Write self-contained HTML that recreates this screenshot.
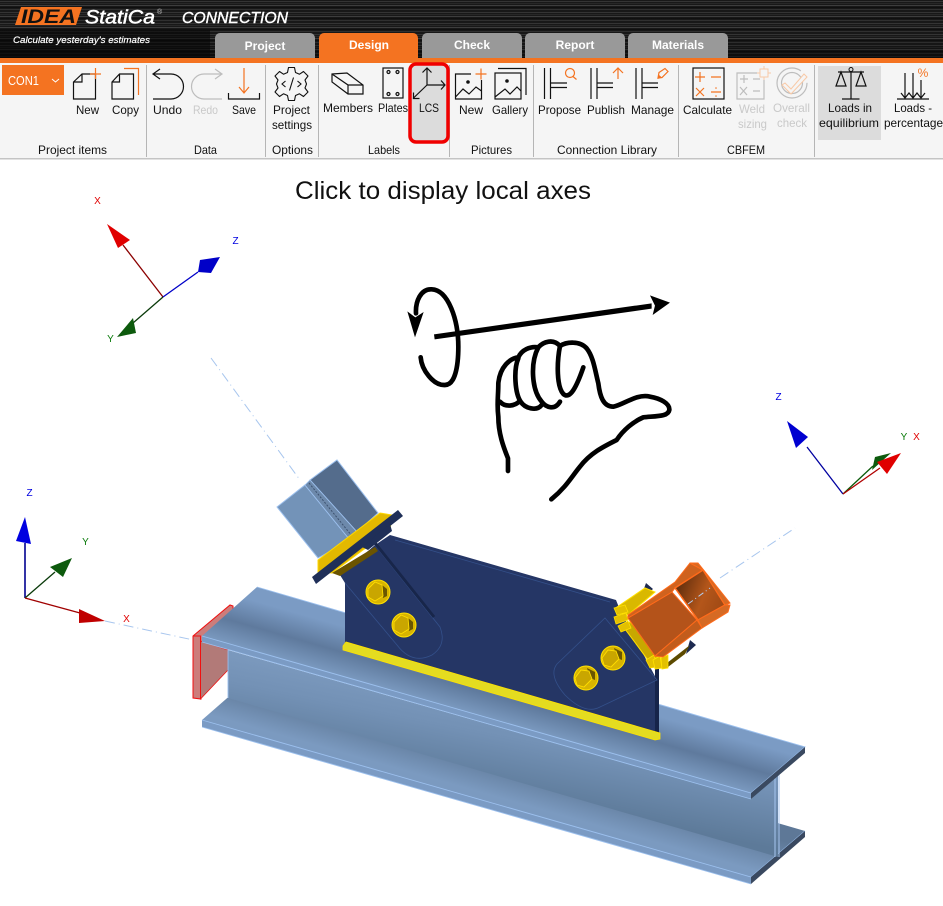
<!DOCTYPE html>
<html lang="en">
<head>
<meta charset="utf-8">
<title>IDEA StatiCa Connection</title>
<style>
html,body{margin:0;padding:0;background:#fff;width:943px;height:906px;overflow:hidden}
svg{display:block;font-family:"Liberation Sans",sans-serif}
.l{font-size:12px;fill:#111}
.d{font-size:12px;fill:#c9c9c9}
.k{fill:none;stroke:#111;stroke-width:1.2}
.o{fill:none;stroke:#f47321;stroke-width:1.2}
.g{fill:none;stroke:#bdbdbd;stroke-width:1.2}
.t{font-size:12px;font-weight:bold;fill:#fff;text-anchor:middle}
.ax{font-size:10px;text-anchor:middle}
.h{fill:none;stroke:#000;stroke-width:14;stroke-linecap:round;stroke-linejoin:round}
.e{stroke:#9cc0ee;stroke-width:.9}
.bo{fill:#d8b400;stroke:#ffe000;stroke-width:1}
.bh{fill:#c9a600;stroke:#ffdd00;stroke-width:.9}
.bn{fill:#6a5600}
</style>
</head>
<body>
<svg width="943" height="906" viewBox="0 0 943 906" xmlns="http://www.w3.org/2000/svg">
<defs>
<pattern id="st" width="943" height="11" patternUnits="userSpaceOnUse">
<rect width="943" height="11" fill="#1b1b1b"/>
<rect y="1" width="943" height="1" fill="#3a3a3a"/>
<rect y="3" width="943" height="1" fill="#2b2b2b"/>
<rect y="5" width="943" height="1" fill="#444"/>
<rect y="7" width="943" height="1" fill="#111"/>
<rect y="9" width="943" height="1" fill="#353535"/>
</pattern>
<linearGradient id="hd" x1="0" y1="0" x2="0" y2="1">
<stop offset="0" stop-color="#000" stop-opacity=".1"/>
<stop offset=".7" stop-color="#000" stop-opacity=".1"/>
<stop offset="1" stop-color="#000" stop-opacity=".55"/>
</linearGradient>
<linearGradient id="web" gradientUnits="userSpaceOnUse" x1="500" y1="690" x2="480" y2="790">
<stop offset="0" stop-color="#7f9dc2"/>
<stop offset=".45" stop-color="#7391b5"/>
<stop offset="1" stop-color="#5d7a99"/>
</linearGradient>
<linearGradient id="tf" gradientUnits="userSpaceOnUse" x1="530" y1="640" x2="500" y2="745">
<stop offset="0" stop-color="#7b9bc4"/>
<stop offset=".35" stop-color="#7b9bc4"/>
<stop offset=".58" stop-color="#5f7a9d"/>
<stop offset=".8" stop-color="#7b9ac0"/>
<stop offset="1" stop-color="#7b9bc4"/>
</linearGradient>
<linearGradient id="bf" gradientUnits="userSpaceOnUse" x1="500" y1="760" x2="480" y2="830">
<stop offset="0" stop-color="#5e7897"/>
<stop offset=".5" stop-color="#7b9ac0"/>
<stop offset="1" stop-color="#7b9bc4"/>
</linearGradient>
<linearGradient id="op" x1="0" y1=".2" x2="1" y2=".6">
<stop offset="0" stop-color="#55280c"/>
<stop offset=".6" stop-color="#b4561a"/>
<stop offset="1" stop-color="#a04a15"/>
</linearGradient>
</defs>

<!-- header -->
<rect width="943" height="58" fill="url(#st)"/>
<rect width="943" height="58" fill="url(#hd)"/>
<rect x="0" y="30" width="210" height="28" fill="#050505" opacity=".55"/>
<path d="M21 7H82L76 25H15Z" fill="#f47321"/>
<text x="21" y="23" font-size="19" font-weight="bold" font-style="italic" fill="#111" textLength="55" lengthAdjust="spacingAndGlyphs">IDEA</text>
<text x="85" y="23.500" font-size="19" font-style="italic" fill="#fff" stroke="#fff" stroke-width=".5" textLength="70" lengthAdjust="spacingAndGlyphs">StatiCa</text>
<text x="157" y="14" font-size="7" fill="#ccc">®</text>
<text x="182" y="23" font-size="16" font-style="italic" fill="#fff" stroke="#fff" stroke-width=".4" textLength="106" lengthAdjust="spacingAndGlyphs">CONNECTION</text>
<text x="13" y="43" font-size="9.500" font-style="italic" fill="#fff" stroke="#fff" stroke-width=".2" textLength="137" lengthAdjust="spacingAndGlyphs">Calculate yesterday's estimates</text>

<!-- tabs -->
<path d="M215 58V38a5 5 0 0 1 5-5h90a5 5 0 0 1 5 5v20Z" fill="#999"/>
<path d="M319 58V38a5 5 0 0 1 5-5h89a5 5 0 0 1 5 5v20Z" fill="#f47321"/>
<path d="M422 58V38a5 5 0 0 1 5-5h90a5 5 0 0 1 5 5v20Z" fill="#999"/>
<path d="M525 58V38a5 5 0 0 1 5-5h90a5 5 0 0 1 5 5v20Z" fill="#999"/>
<path d="M628 58V38a5 5 0 0 1 5-5h90a5 5 0 0 1 5 5v20Z" fill="#999"/>
<text class="t" x="265" y="50">Project</text>
<text class="t" x="369" y="49">Design</text>
<text class="t" x="472" y="49">Check</text>
<text class="t" x="575" y="49">Report</text>
<text class="t" x="678" y="49">Materials</text>

<rect y="58" width="943" height="5" fill="#f47321"/>
<rect y="63" width="943" height="95" fill="#f5f5f5"/>
<rect y="158" width="943" height="1.500" fill="#c4c4c4"/>

<!-- separators -->
<g fill="#b5b5b5">
<rect x="146" y="65" width="1" height="92"/><rect x="265" y="65" width="1" height="92"/>
<rect x="318" y="65" width="1" height="92"/><rect x="449" y="65" width="1" height="92"/>
<rect x="533" y="65" width="1" height="92"/><rect x="678" y="65" width="1" height="92"/>
<rect x="814" y="65" width="1" height="92"/>
</g>

<!-- highlights -->
<rect x="818" y="66" width="63" height="74" fill="#dcdcdc"/>
<rect x="410" y="64" width="38" height="78" rx="6" fill="#dcdcdc" stroke="#f00000" stroke-width="3.500"/>

<!-- CON1 -->
<rect x="2" y="65" width="62" height="30" fill="#f47321"/>
<text x="8" y="85" font-size="12.500" fill="#fff" textLength="31" lengthAdjust="spacingAndGlyphs">CON1</text>
<path d="M52 79l3.500 3 3.500-3" fill="none" stroke="#fff" stroke-width="1"/>

<!-- New -->
<path class="k" d="M73.500 82L82 74H95.500V99H73.500ZM82 74V82H73.500"/>
<path class="o" d="M95.500 68V79M90 74H101"/>
<!-- Copy -->
<path class="k" d="M112 82L119.500 74H133.500V99H112ZM119.500 74V82H112"/>
<path class="o" d="M124 68.500H138.500V95"/>
<!-- Undo -->
<path class="k" d="M153 74H171A12.500 12.500 0 0 1 171 99H153M160 69L153 74L160 79"/>
<!-- Redo -->
<path class="g" d="M222 74H204A12.500 12.500 0 0 0 204 99H222M215 69L222 74L215 79"/>
<!-- Save -->
<path class="o" d="M244 68V93M239 87L244 93L249 87"/>
<path class="k" d="M228.500 93V99H259.500V93"/>
<!-- Settings -->
<g transform="translate(291.500 84)" fill="#f5f5f5" stroke="#111" stroke-width="1.100">
<path d="M-3-16.500H3L4-11.500 8-9.800 12-12.500 16.500-8 13.500-4 15-.0 13.500 4 16.500 8 12 12.500 8 9.800 4 11.500 3 16.500H-3L-4 11.500-8 9.800-12 12.500-16.500 8-13.500 4-15 0-13.500-4-16.500-8-12-12.500-8-9.800-4-11.500Z" stroke-linejoin="round"/>
<path d="M-6-3L-9.500 0-6 3M6-3L9.500 0 6 3M2-6.500L-2 6.500" fill="none"/>
</g>
<!-- Members -->
<path class="k" d="M332 74L347 73L363 85V94H348L332 82ZM332 74L348 85V94M348 85H363"/>
<!-- Plates -->
<rect class="k" x="383" y="68" width="20" height="30"/>
<g class="k"><circle cx="388.500" cy="72" r="1.500"/><circle cx="397.500" cy="72" r="1.500"/><circle cx="388.500" cy="94" r="1.500"/><circle cx="397.500" cy="94" r="1.500"/></g>
<!-- LCS -->
<path class="k" d="M427 85V68M422.500 72.500L427 68L431.500 72.500M427 85H445M441 80.500L445 85L441 89.500M427 85L413 98.500M413.500 92.500V98.500H419.500"/>
<!-- Picture new -->
<path class="k" d="M471 74H455.500V99H481.500V80"/>
<circle cx="468" cy="82" r="1.800" fill="#111"/>
<path class="k" d="M455.500 97L463 89L469 94L476 87L481.500 91"/>
<path class="o" d="M481 68.500V79.500M475.500 74H486.500"/>
<!-- Gallery -->
<rect class="k" x="495" y="73" width="26" height="26"/>
<path class="k" d="M498 68.500H526V95M495 97L505 89L510 94L517 87L521 91"/>
<circle cx="507" cy="81" r="1.800" fill="#111"/>
<!-- Connection library -->
<path class="k" d="M544.500 68V99M550.500 68V99M550.500 83H567M550.500 87.500H567"/>
<circle class="o" cx="570" cy="73" r="4.500"/><path class="o" d="M573 76.500L576.500 79.500"/>
<path class="k" d="M591 68V99M597 68V99M597 83H613M597 87.500H613"/>
<path class="o" d="M618 68V79M613 73L618 68L623 73"/>
<path class="k" d="M636 68V99M642 68V99M642 83H658M642 87.500H658"/>
<path class="o" d="M658 78L659 72.500L665 68.500L668 71.500L662 77.500Z"/><path d="M657.500 79L658.500 74.500L662 77.500Z" fill="#f47321"/>
<!-- Calculate -->
<rect class="k" x="693" y="68" width="31" height="31"/>
<path class="o" d="M695 77H705M700 72V82M711 77H721M696 88L704 96M704 88L696 96M711 92H721"/>
<circle cx="716" cy="88" r=".8" fill="#f47321"/><circle cx="716" cy="96" r=".8" fill="#f47321"/>
<!-- Weld sizing -->
<path class="g" d="M757 73H737V99H764V80M740 79H748M744 75V83M753 79H760M740 87L747 95M747 87L740 95M753 91H760"/>
<rect x="760" y="69" width="8" height="8" fill="none" stroke="#f8c9a6" stroke-width="1"/>
<path d="M764 66V69M764 77V80M757 73H760M768 73H771" stroke="#f8c9a6" stroke-width="1"/>
<!-- Overall check -->
<circle class="g" cx="792" cy="83" r="15" stroke-dasharray="80 14"/>
<circle class="g" cx="792" cy="83" r="10.500"/>
<path d="M785 83L791 89L804 74L807 77L791 94L782 85Z" fill="#f5f5f5" stroke="#f8c9a6"/>
<!-- Equilibrium -->
<path class="k" d="M851 70V98.500M842 99H859.500M838 72H864M841 72L836 86H846ZM861 72L856 86H866Z"/>
<circle cx="851" cy="69.500" r="2" fill="#dcdcdc" stroke="#111"/>
<!-- percentage -->
<path class="k" d="M905 73V98M913 73V98M921 80V98M897 99H929M901 93L905 98L909 93L913 98L917 93L921 98L925 93"/>
<text x="923" y="77" font-size="12" fill="#f47321" text-anchor="middle">%</text>

<!-- labels -->
<text class="l" x="76" y="114" textLength="23" lengthAdjust="spacingAndGlyphs">New</text>
<text class="l" x="112" y="114" textLength="27" lengthAdjust="spacingAndGlyphs">Copy</text>
<text class="l" x="153" y="114" textLength="29" lengthAdjust="spacingAndGlyphs">Undo</text>
<text class="d" x="193" y="114" textLength="25" lengthAdjust="spacingAndGlyphs">Redo</text>
<text class="l" x="232" y="114" textLength="24" lengthAdjust="spacingAndGlyphs">Save</text>
<text class="l" x="273" y="114" textLength="37" lengthAdjust="spacingAndGlyphs">Project</text>
<text class="l" x="272" y="129" textLength="40" lengthAdjust="spacingAndGlyphs">settings</text>
<text class="l" x="323" y="112" textLength="50" lengthAdjust="spacingAndGlyphs">Members</text>
<text class="l" x="378" y="112" textLength="30" lengthAdjust="spacingAndGlyphs">Plates</text>
<text class="l" x="419" y="112" textLength="20" lengthAdjust="spacingAndGlyphs">LCS</text>
<text class="l" x="459" y="114" textLength="24" lengthAdjust="spacingAndGlyphs">New</text>
<text class="l" x="492" y="114" textLength="36" lengthAdjust="spacingAndGlyphs">Gallery</text>
<text class="l" x="538" y="114" textLength="43" lengthAdjust="spacingAndGlyphs">Propose</text>
<text class="l" x="587" y="114" textLength="38" lengthAdjust="spacingAndGlyphs">Publish</text>
<text class="l" x="631" y="114" textLength="43" lengthAdjust="spacingAndGlyphs">Manage</text>
<text class="l" x="683" y="114" textLength="49" lengthAdjust="spacingAndGlyphs">Calculate</text>
<text class="d" x="739" y="113" textLength="26" lengthAdjust="spacingAndGlyphs">Weld</text>
<text class="d" x="738" y="128" textLength="29" lengthAdjust="spacingAndGlyphs">sizing</text>
<text class="d" x="773" y="112" textLength="37" lengthAdjust="spacingAndGlyphs">Overall</text>
<text class="d" x="777" y="127" textLength="30" lengthAdjust="spacingAndGlyphs">check</text>
<text class="l" x="828" y="112" textLength="44" lengthAdjust="spacingAndGlyphs">Loads in</text>
<text class="l" x="819" y="127" textLength="60" lengthAdjust="spacingAndGlyphs">equilibrium</text>
<text class="l" x="894" y="112" textLength="38" lengthAdjust="spacingAndGlyphs">Loads -</text>
<text class="l" x="884" y="127" textLength="59" lengthAdjust="spacingAndGlyphs">percentage</text>

<text class="l" x="38" y="154" textLength="69" lengthAdjust="spacingAndGlyphs">Project items</text>
<text class="l" x="194" y="154" textLength="23" lengthAdjust="spacingAndGlyphs">Data</text>
<text class="l" x="272" y="154" textLength="41" lengthAdjust="spacingAndGlyphs">Options</text>
<text class="l" x="368" y="154" textLength="32" lengthAdjust="spacingAndGlyphs">Labels</text>
<text class="l" x="471" y="154" textLength="41" lengthAdjust="spacingAndGlyphs">Pictures</text>
<text class="l" x="557" y="154" textLength="100" lengthAdjust="spacingAndGlyphs">Connection Library</text>
<text class="l" x="727" y="154" textLength="38" lengthAdjust="spacingAndGlyphs">CBFEM</text>

<text x="295" y="199" font-size="25" fill="#111" textLength="296" lengthAdjust="spacingAndGlyphs">Click to display local axes</text>

<!-- right hand rule -->
<g transform="translate(390 270) scale(.3333)">
<path class="h" d="M92 262C95 300 130 347 165 345C195 345 205 290 205 230C205 150 175 60 125 58C92 56 76 95 78 130"/>
<path d="M75 202L52 124L76 142L101 126Z" fill="#000"/>
<path d="M132 193L785 100V116L134 208Z" fill="#000"/>
<path d="M780 76L840 98L788 135L795 107Z" fill="#000"/>
<path class="h" d="M354 603V565C340 530 325 490 325 440C320 400 325 380 325 340C330 290 360 265 385 262C395 240 420 228 445 232C460 215 490 205 510 228C530 215 570 212 590 235C610 260 615 300 625 340C630 380 640 410 670 410C700 405 740 370 780 380C810 385 840 400 838 420C835 440 800 438 760 442C730 455 700 480 680 510C640 530 600 550 570 590C545 620 530 650 484 688"/>
<path class="h" d="M330 395C345 412 375 410 390 392M385 265C370 300 375 370 392 395C405 415 440 425 455 405M445 232C420 280 425 360 455 395C470 415 495 420 510 395M510 228C500 280 500 350 520 372C540 390 560 350 580 292"/>
</g>

<!-- axis dash lines -->
<g stroke="#a8c6ee" stroke-width="1" fill="none">
<path d="M211 358L300 480" stroke-dasharray="10 4 1 4"/>
<path d="M105 621L240 650" stroke-dasharray="10 4 1 4"/>
<path d="M720 578L795 528" stroke-dasharray="10 4 1 4"/>
</g>

<!-- Triad 1 -->
<g stroke-width="1.300" fill="none">
<path d="M163 297L123 245" stroke="#8b0000"/><path d="M163 297L198 272" stroke="#0000c8"/><path d="M163 297L133 323" stroke="#0a3a0a"/>
</g>
<path d="M107 224L130 240L118 248Z" fill="#e00000"/>
<path d="M220 257L200 260L198 272L211 273Z" fill="#0000c8"/>
<path d="M117 337L133 318L136 333Z" fill="#0d5a0d"/>
<text class="ax" x="97.500" y="204" fill="#e00000">X</text>
<text class="ax" x="235.500" y="244" fill="#0000e0">Z</text>
<text class="ax" x="110.500" y="342" fill="#0a7a0a">Y</text>

<!-- Triad 2 -->
<path d="M25 598V543" stroke="#000090" stroke-width="1.600"/>
<path d="M25 598L55 572" stroke="#0a3a0a" stroke-width="1.300"/>
<path d="M25 598L80 613" stroke="#a00000" stroke-width="1.300"/>
<path d="M25 517L16 541L31 544Z" fill="#0000e0"/>
<path d="M72 558L50 567L63 577Z" fill="#0d5a0d"/>
<path d="M105 621L79 609V623Z" fill="#c00000"/>
<text class="ax" x="29.500" y="496" fill="#0000e0">Z</text>
<text class="ax" x="85.500" y="545" fill="#0a7a0a">Y</text>
<text class="ax" x="126.500" y="622" fill="#e00000">X</text>

<!-- Triad 3 -->
<path d="M843 494L807 447" stroke="#0000a0" stroke-width="1.300"/>
<path d="M843 494L873 466" stroke="#0a5a0a" stroke-width="1.300"/>
<path d="M843 494L880 468" stroke="#b00000" stroke-width="1.300"/>
<path d="M787 421L796 448L808 437Z" fill="#0000d0"/>
<path d="M891 453L875 457L872 470Z" fill="#0d5a0d"/>
<path d="M901 453L877 462L887 474Z" fill="#e00000"/>
<text class="ax" x="778.500" y="400" fill="#0000e0">Z</text>
<text class="ax" x="904" y="440" fill="#0a7a0a">Y</text>
<text class="ax" x="916.500" y="440" fill="#e00000">X</text>

<!-- Red member -->
<path d="M193 636L230 605L233 606L233 640L201 668V699L193 698Z" fill="#cc7d7b" stroke="#f01010" stroke-width="1"/>
<path d="M200.500 641L228 650V670L200.500 699Z" fill="#b27a78" stroke="#f01010" stroke-width=".8"/>
<path d="M193 636H200.500V699" fill="none" stroke="#f01010"/>

<!-- Beam -->
<path d="M202 720L257 672L805 831L751 877Z" fill="url(#bf)"/>
<path d="M202 720L751 877V884L202 727Z" fill="#7b9bc4"/>
<path d="M202 720L751 877L805 831M202 727L751 884" class="e" fill="none"/>
<path d="M751 877L805 831V837L751 884Z" fill="#3a4960"/>
<path d="M228 650L751 799L778 772V857L228 698Z" fill="url(#web)"/>
<path d="M228 650V698" class="e"/>
<path d="M775 772V857M779 772V857" stroke="#a6c6f0" stroke-width="1"/>
<path d="M257 587L805 747L751 793L202 636Z" fill="url(#tf)"/>
<path d="M202 636L751 793V799L202 642Z" fill="#7b9bc4"/>
<path d="M257 587L805 747L751 793L202 636M202 642L751 799" class="e" fill="none"/>
<path d="M751 793L805 747V753L751 799Z" fill="#3a4960"/>

<!-- Gusset plate -->
<path d="M390 535L616 600L620 610L657 680V733L345 643V583L340 575L375 545Z" fill="#253665"/>
<path d="M657 665V735" stroke="#16244a" stroke-width="4"/>
<path d="M395 540L610 602" stroke="#34508a" stroke-width=".8"/>
<path d="M345 583L397 645Q412 665 432 655Q447 645 440 627L375 545" fill="none" stroke="#34508a" stroke-width=".8"/>
<path d="M375 543L434 617" stroke="#18264a" stroke-width="3"/>
<path d="M605 618L657 680L600 707Q585 715 565 695Q548 675 557 664Z" fill="none" stroke="#34508a" stroke-width=".8"/>

<!-- Weld -->
<path d="M343 646L346 642L660 733V739L655 740L343 650Z" fill="#e4dc20" stroke="#ffe100" stroke-width=".8"/>

<!-- Left brace -->
<path d="M277 507L305 485L350 540L318 558Z" fill="#7393b8" stroke="#9cc0ee" stroke-width="1"/>
<path d="M310 480L337 460L378 513L357 532Z" fill="#546c8c" stroke="#9cc0ee" stroke-width="1"/>
<path d="M305 485L310 480L357 532L350 540Z" fill="#6d89ab" stroke="#9cc0ee" stroke-width=".8"/>
<path d="M309 483L352 536" stroke="#3d5270" stroke-width="1" stroke-dasharray="2 1.500"/>
<path d="M318 560L380 513L392 515L390 530L332 573L318 572Z" fill="#e3b900" stroke="#ffd800" stroke-width="1"/>
<path d="M332 573L375 547L378 551L340 576Z" fill="#6b5400"/>
<path d="M312 577L398 510L403 516L316 584Z" fill="#1f2f58"/>
<path d="M362 547L390 524L392 531L368 550Z" fill="#1f2f58"/>

<!-- Bolts -->
<g transform="translate(378 592)"><circle class="bo" r="12"/><path class="bn" d="M4-7L9-3V4L5 6Z"/><path class="bh" d="M-10-3L-3-10 4-7 5 4-3 9-10 5Z"/></g>
<g transform="translate(404 625)"><circle class="bo" r="12"/><path class="bn" d="M4-7L9-3V4L5 6Z"/><path class="bh" d="M-10-3L-3-10 4-7 5 4-3 9-10 5Z"/></g>
<g transform="translate(586 678)"><circle class="bo" r="12"/><path class="bn" d="M1-10L9-6V2L4 0Z"/><path class="bh" d="M-11 0L-5-8 3-7 6 1-2 9-9 7Z"/></g>
<g transform="translate(613 658)"><circle class="bo" r="12"/><path class="bn" d="M1-10L9-6V2L4 0Z"/><path class="bh" d="M-11 0L-5-8 3-7 6 1-2 9-9 7Z"/></g>

<!-- Right brace -->
<path d="M646 583L653 589L640 600Z" fill="#1d2a50"/>
<path d="M690 640L696 645L686 654Z" fill="#1d2a50"/>
<path d="M617 607L645 588L655 592L628 615Z" fill="#d9b800" stroke="#ffe000" stroke-width="1"/>
<path d="M622 625L630 622L664 656L648 660Z" fill="#c8a800" stroke="#ffe000" stroke-width="1"/>
<path d="M667 663L690 645L685 654L668 667Z" fill="#5c4a00"/>
<g fill="#e3c000" stroke="#ffe000" stroke-width=".8">
<path d="M614 608L625 605L628 612L617 615Z"/><path d="M614 617L626 613L628 620L616 624Z"/><path d="M618 626L628 621L631 628L621 632Z"/>
<path d="M646 660L654 655L657 667L650 668Z"/><path d="M653 660L660 656L662 668L655 669Z"/><path d="M661 658L668 655L668 668L662 669Z"/>
</g>
<path d="M628 618L672 592L697 620L655 656Z" fill="#b4531a" stroke="#ff6a1a" stroke-width="1"/>
<path d="M628 615L675 582L690 563L703 570L675 588L672 592L628 618Z" fill="#cf621e" stroke="#ff6a1a" stroke-width="1"/>
<path d="M675 588L703 570L725 605L698 620Z" fill="url(#op)" stroke="#ff6a1a" stroke-width="1.500"/>
<path d="M655 656L697 620L702 628L663 657Z" fill="#c25c1c" stroke="#ff6a1a" stroke-width="1"/>
<path d="M698 620L725 605L730 605L728 612L702 628Z" fill="#d66a24" stroke="#ff6a1a" stroke-width="1"/>
<path d="M690 563L698 563L730 603L725 605L703 570Z" fill="#d66a24" stroke="#ff6a1a" stroke-width="1"/>
<path d="M688 604L710 588" stroke="#b4d0f4" stroke-width="1" stroke-dasharray="6 3 1 3" fill="none"/>
</svg>
</body>
</html>
